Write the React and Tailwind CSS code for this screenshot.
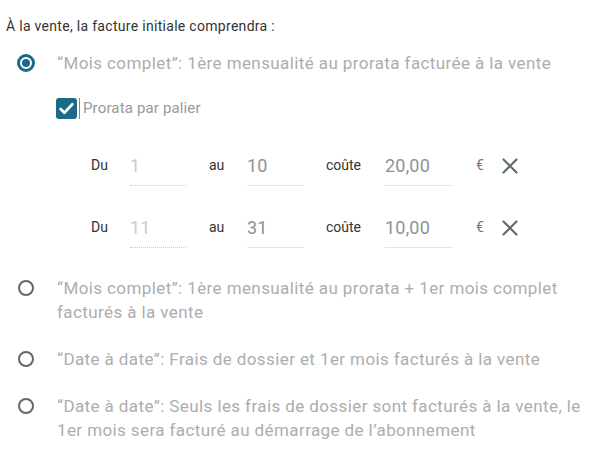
const Radio = ({ checked }) =>
    checked ? (
        <span className="flex items-center justify-center w-[18px] h-[18px] rounded-full border-[3px] border-[#1a6a88] shrink-0">
            <span className="w-[8px] h-[8px] rounded-full bg-[#1a6a88]" />
        </span>
    ) : (
        <span className="w-[16px] h-[16px] rounded-full border-2 border-[#666] shrink-0" />
    );

const Cross = () => (
    <svg width="16" height="16" viewBox="0 0 16 16" className="ml-[18px] shrink-0">
        <path d="M1.5 1.5l13 13M14.5 1.5l-13 13" stroke="#5f6b73" strokeWidth="2.2" strokeLinecap="round" />
    </svg>
);

const Palier = ({ from, to, price }) => (
    <div className="flex items-center h-[62px] text-[14px] text-[#333]">
        <span className="w-[39px] ml-[1px]">Du</span>
        <div className="w-[56px] h-[40px] flex items-center border-b border-dotted border-[#ccc] text-[18px] tracking-[0.2px] text-[#ccc]">
            {from}
        </div>
        <span className="ml-[23px] w-[38px]">au</span>
        <div className="w-[57px] h-[40px] flex items-center border-b border-[#e5e5e5] text-[18px] tracking-[0.2px] text-[#8a9299]">
            {to}
        </div>
        <span className="ml-[22px] w-[59px]">coûte</span>
        <div className="w-[68px] h-[40px] flex items-center border-b border-[#e5e5e5] text-[18px] tracking-[0.2px] text-[#8a9299]">
            {price}
        </div>
        <span className="ml-[23px] text-[#777]">€</span>
    </div>
);

const Option = ({ children, checked }) => (
    <div className="flex items-start">
        <div className="w-[36px] h-[24px] flex items-center justify-center shrink-0">
            <Radio checked={checked} />
        </div>
        <p className="ml-[13px] text-[17px] leading-[24px] tracking-[0.4px] text-[#adadad]">{children}</p>
    </div>
);

export default function App() {
    return (
        <div className="w-[596px] h-[459px] bg-white px-[8px] pt-[16px] font-['Roboto',sans-serif]">
            <p className="text-[14px] leading-[20px] tracking-[0.3px] text-[#333] -ml-[2px]">
                À la vente, la facture initiale comprendra :
            </p>
            <div className="mt-[15px]">
                <Option checked>“Mois complet”: 1ère mensualité au prorata facturée à la vente</Option>
            </div>
            <div className="ml-[48px] mt-[22px] flex items-center">
                <span className="w-[21px] h-[21px] rounded-[3px] bg-[#1b6a87] flex items-center justify-center">
                    <svg width="17" height="17" viewBox="0 0 16 16" fill="none">
                        <path d="M2.5 8.5l3.5 3.5 7.5-8" stroke="white" strokeWidth="2.5" strokeLinecap="round" strokeLinejoin="round" />
                    </svg>
                </span>
                <span className="ml-[2px] w-px h-[21px] bg-[#888]" />
                <span className="ml-[3px] text-[15px] tracking-[0.15px] text-[#999]">Prorata par palier</span>
            </div>
            <div className="ml-[82px] mt-[15px]">
                <div className="flex items-center">
                    <Palier from="1" to="10" price="20,00" />
                    <Cross />
                </div>
                <div className="flex items-center">
                    <Palier from="11" to="31" price="10,00" />
                    <Cross />
                </div>
            </div>
            <div className="mt-[17px] flex flex-col gap-[23px]">
                <Option>“Mois complet”: 1ère mensualité au prorata + 1er mois complet facturés à la vente</Option>
                <Option>“Date à date”: Frais de dossier et 1er mois facturés à la vente</Option>
                <Option>“Date à date”: Seuls les frais de dossier sont facturés à la vente, le 1er mois sera facturé au démarrage de l’abonnement</Option>
            </div>
        </div>
    );
}
